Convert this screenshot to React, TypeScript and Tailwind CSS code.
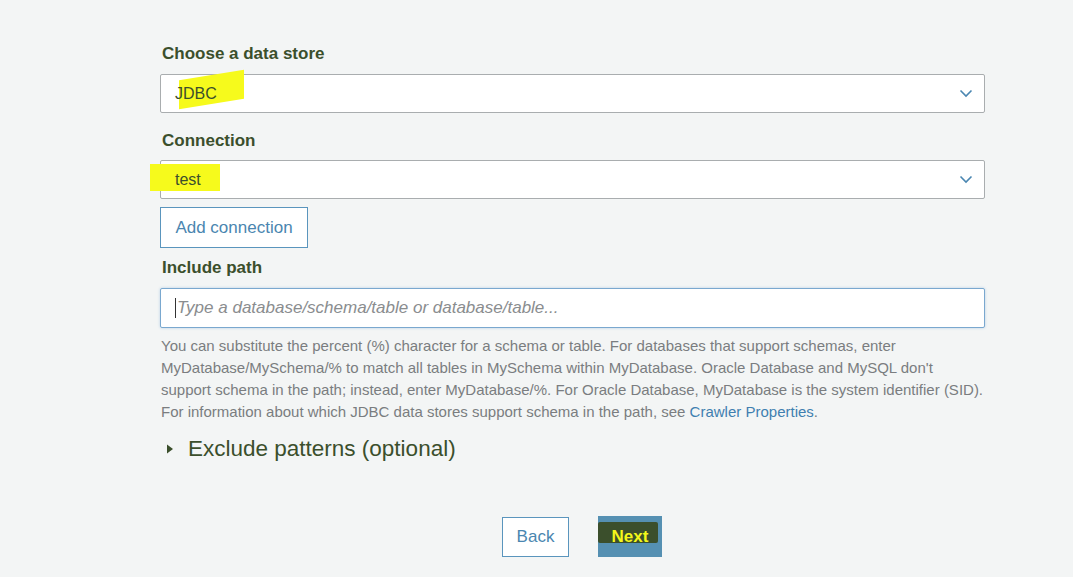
import React from 'react'

const Chevron: React.FC = () => (
  <svg width="14" height="9" viewBox="0 0 14 9" fill="none" className="shrink-0">
    <path d="M1.5 1.5 L7 7 L12.5 1.5" stroke="#4a86b1" strokeWidth="1.6" />
  </svg>
)

const App: React.FC = () => {
  return (
    <div className="min-h-[577px] w-full bg-[#f3f5f5] font-['Liberation_Sans',Arial,sans-serif]">
      <div className="ml-[160px] w-[825px] pt-[44px]">
        {/* Data store */}
        <div className="pl-[2px] text-[17px] font-bold leading-[20px] text-[#3b4f2c]">Choose a data store</div>
        <div className="mt-[10px] flex h-[39px] items-center justify-between rounded-[2px] border border-[#a9adaf] bg-white pl-[14px] pr-[11px]">
          <span className="relative text-[16px] text-[#3b4f2c]">
            <span className="absolute left-[4px] top-[-7px] h-[29px] w-[65px] -skew-y-[9deg] bg-[#f6fa1c]" />
            <span className="relative">JDBC</span>
          </span>
          <Chevron />
        </div>

        {/* Connection */}
        <div className="mt-[18px] pl-[2px] text-[17px] font-bold leading-[20px] text-[#3b4f2c]">Connection</div>
        <div className="relative mt-[9px] flex h-[39px] items-center justify-between rounded-[2px] border border-[#a9adaf] bg-white pl-[14px] pr-[11px]">
          <span className="absolute left-[-11px] top-[3px] h-[27px] w-[70px] bg-[#f6fa1c]" />
          <span className="relative text-[16px] text-[#3b4f2c]">test</span>
          <Chevron />
        </div>
        <button className="mt-[8px] h-[41px] w-[148px] border border-[#5a95bd] bg-white text-[17px] text-[#4a86b0]">
          Add connection
        </button>

        {/* Include path */}
        <div className="mt-[10px] pl-[2px] text-[17px] font-bold leading-[20px] text-[#3b4f2c]">Include path</div>
        <div className="mt-[10px] flex h-[40px] items-center rounded-[2px] border border-[#7aa8cf] bg-white pl-[14px] shadow-[0_0_3px_#b7d0e6]">
          <span className="mr-[1px] h-[20px] w-px bg-[#333]" />
          <span className="text-[17px] italic text-[#8a8d8f]">Type a database/schema/table or database/table...</span>
        </div>
        <p className="mt-[7px] whitespace-nowrap pl-px text-[15px] leading-[22px] text-[#7a7d80]">
          You can substitute the percent (%) character for a schema or table. For databases that support schemas, enter
          <br />
          MyDatabase/MySchema/% to match all tables in MySchema within MyDatabase. Oracle Database and MySQL don't
          <br />
          support schema in the path; instead, enter MyDatabase/%. For Oracle Database, MyDatabase is the system identifier (SID).
          <br />
          For information about which JDBC data stores support schema in the path, see{' '}
          <span className="text-[#3f7fb0]">Crawler Properties</span>.
        </p>

        {/* Exclude */}
        <div className="mt-[12px] flex items-center pl-[6px] text-[#3b4f2c]">
          <svg width="8" height="12" viewBox="0 0 8 12" className="mr-[14px]">
            <path d="M1 1.5 L7 6 L1 10.5 Z" fill="#3b4f2c" />
          </svg>
          <span className="text-[22.5px] leading-[28px]">Exclude patterns (optional)</span>
        </div>
      </div>

      {/* Footer buttons */}
      <div className="mt-[54px] flex justify-center gap-[29px] pl-[91px]">
        <button className="h-[40px] w-[67px] border border-[#5a95bd] bg-white text-[17px] text-[#4a86b0]">Back</button>
        <button className="relative -mt-px flex h-[41px] w-[64px] items-center justify-center bg-[#5590b2]">
          <span className="absolute left-0 top-[6px] h-[21px] w-[60px] rounded-[2px] bg-[#3b4f2c]" />
          <span className="relative text-[17px] font-bold text-[#f4f81a]">Next</span>
        </button>
      </div>
    </div>
  )
}

export default App
